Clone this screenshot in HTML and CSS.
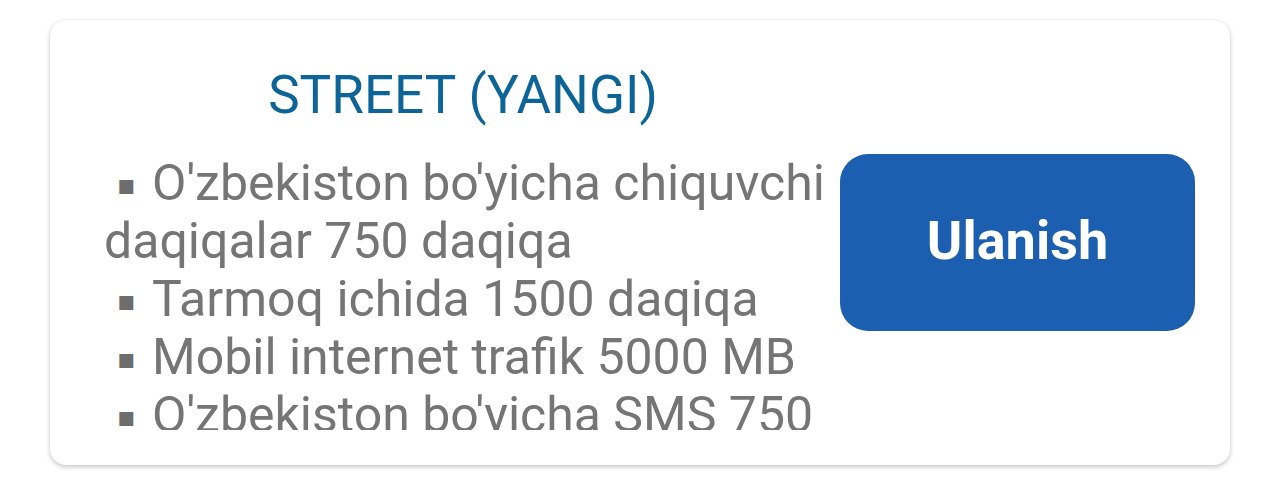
FILE: index.html
```html
<!DOCTYPE html>
<html lang="uz">
<head>
<meta charset="utf-8">
<title>Street (Yangi)</title>
<link rel="stylesheet" href="styles.css">
</head>
<body>
<div class="page">
  <div class="card">
    <div class="info">
      <h2 class="title">STREET (YANGI)</h2>
      <div class="features">
        <p class="line"><span class="bullet">▪</span>O'zbekiston bo'yicha chiquvchi daqiqalar 750 daqiqa</p>
        <p class="line"><span class="bullet">▪</span>Tarmoq ichida 1500 daqiqa</p>
        <p class="line"><span class="bullet">▪</span>Mobil internet trafik 5000 MB</p>
        <p class="line"><span class="bullet">▪</span>O'zbekiston bo'yicha SMS 750</p>
      </div>
    </div>
    <button class="connect" type="button">Ulanish</button>
  </div>
</div>
</body>
</html>
```

FILE: styles.css
```css
html, body {
  margin: 0;
  padding: 0;
  background: #ffffff;
}

body {
  font-family: Roboto, "Liberation Sans", Arial, sans-serif;
}

.page {
  padding: 20px 50px 23px 50px;
}

.card {
  display: flex;
  align-items: center;
  height: 445px;
  box-sizing: border-box;
  padding: 0 35px 0 54px;
  background: #ffffff;
  border-radius: 16px;
  box-shadow: 0 2px 5px rgba(0, 0, 0, 0.22), 0 0 2px rgba(0, 0, 0, 0.06);
}

.info {
  width: 732px;
  align-self: stretch;
  padding-top: 44px;
  box-sizing: border-box;
}

.title {
  margin: 0;
  padding-right: 14px;
  font-weight: 400;
  font-size: 53px;
  line-height: 62px;
  color: #0c6497;
  text-align: center;
}

.features {
  margin-top: 28px;
  max-height: 276px;
  overflow: hidden;
}

.line {
  margin: 0;
  font-size: 50px;
  line-height: 58px;
  color: #757575;
}

.bullet {
  display: inline-block;
  margin: 0 16px 0 13px;
  font-family: "DejaVu Sans", sans-serif;
  font-size: 28px;
  line-height: 1;
  vertical-align: 6px;
  color: #6d6d6d;
}

.connect {
  margin-left: auto;
  width: 355px;
  height: 177px;
  border: none;
  border-radius: 28px;
  background: #1c5eb0;
  color: #ffffff;
  font-family: Roboto, "Liberation Sans", Arial, sans-serif;
  font-weight: 700;
  font-size: 54px;
  padding: 0 0 4px 0;
}
```
